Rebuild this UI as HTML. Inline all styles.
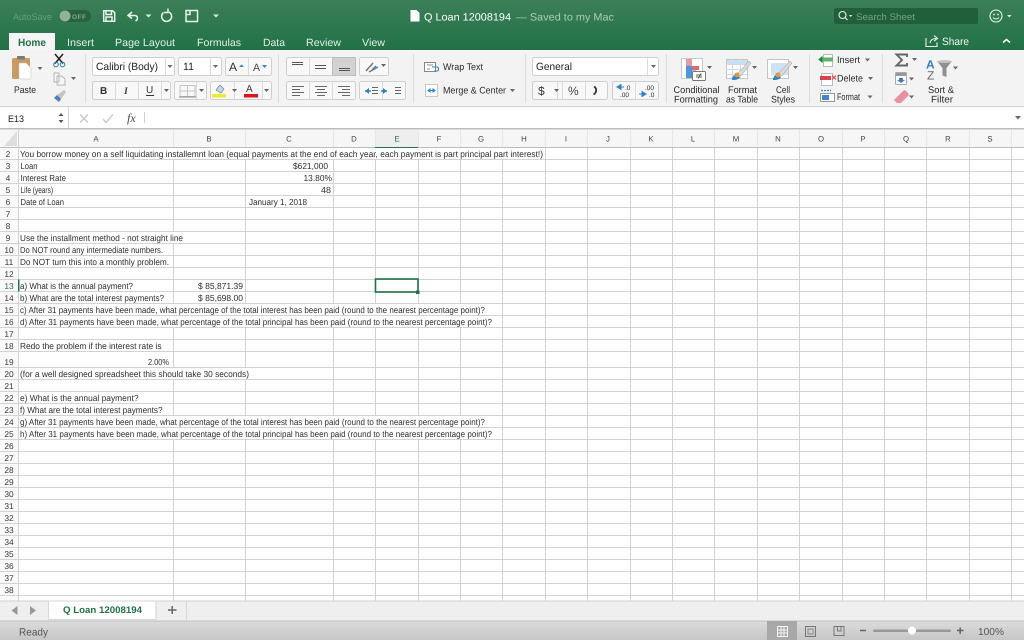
<!DOCTYPE html>
<html><head><meta charset="utf-8"><title>Q Loan 12008194</title>
<style>
html,body{margin:0;padding:0;background:#fff;width:1024px;height:640px;overflow:hidden}
svg{display:block;filter:blur(.38px);font-family:"Liberation Sans",sans-serif;text-rendering:geometricPrecision}
.c text{font-size:8.8px;fill:#2e2e2e}
.r text{font-size:8.4px;fill:#3a3a3a;text-anchor:middle}
.h text{font-size:7.8px;fill:#444;text-anchor:middle}
.t{font-size:10.5px;fill:#e4efe8}
.l{font-size:9.6px;fill:#2a2a2a}
</style></head><body>
<svg width="1024" height="640" viewBox="0 0 1024 640" xmlns="http://www.w3.org/2000/svg">
<defs>
<linearGradient id="g" x1="0" y1="0" x2="0" y2="1"><stop offset="0" stop-color="#3c7f58"/><stop offset="1" stop-color="#217147"/></linearGradient>
<linearGradient id="s" x1="0" y1="0" x2="0" y2="1"><stop offset="0" stop-color="#dcdcdc"/><stop offset="1" stop-color="#c6c6c6"/></linearGradient>
<path id="k" d="M0 0h5l-2.500 3z" fill="#666"/>
<path id="w" d="M0 0h6l-3 3z" fill="#dcebe2"/>
</defs>

<!-- title bar -->
<rect width="1024" height="50" fill="url(#g)"/>
<text x="13" y="20" font-size="9.500" fill="#659f7d" textLength="39" lengthAdjust="spacingAndGlyphs">AutoSave</text>
<rect x="59" y="10" width="32" height="12" rx="6" fill="#2a6240"/>
<circle cx="65" cy="16" r="5.500" fill="#8fb29d"/>
<text x="72" y="19" font-size="6.500" font-weight="bold" fill="#7ea88f" textLength="14">OFF</text>
<g fill="none" stroke="#e9f2ec" stroke-width="1.500">
<path d="M103.700 10.700h9l2 2v8.600h-11z"/><path d="M106 11v3.500h5.500V11M106 21v-4h6v4"/>
<path d="M132 12l-4 3.500 4 3M128.500 15.500h6c3.500 0 4 4 1 5.500"/>
<path d="M163.500 12.500a5 5 0 1 0 5.500-.5M168 8.500v4h-4"/>
<rect x="186" y="10.500" width="11.500" height="11"/><path d="M190 10.500v4h-3.500"/>
</g>
<use href="#w" x="145.500" y="14.500"/><use href="#w" x="213" y="14.500"/>
<path d="M410.500 10h6l3 3v8.500h-9z" fill="#fff"/>
<text x="424" y="20.500" font-size="10.500" fill="#fff" textLength="87" lengthAdjust="spacingAndGlyphs">Q Loan 12008194</text>
<text x="516" y="20.500" font-size="10.500" fill="#a6cfb6" textLength="98" lengthAdjust="spacingAndGlyphs">— Saved to my Mac</text>
<rect x="834" y="8" width="144" height="16" rx="2" fill="#205f3a"/>
<circle cx="842.500" cy="15" r="3.500" fill="none" stroke="#e2eee7" stroke-width="1.100"/><path d="M845 17.500l2.500 2.500" stroke="#e2eee7" stroke-width="1.200"/>
<path d="M849 15h3.500l-1.750 2z" fill="#dcebe2"/>
<text x="856" y="20" font-size="9.500" fill="#73a388" textLength="59" lengthAdjust="spacingAndGlyphs">Search Sheet</text>
<circle cx="996" cy="16" r="6" fill="none" stroke="#e8f1eb" stroke-width="1.100"/>
<circle cx="994" cy="14.500" r=".9" fill="#e8f1eb"/><circle cx="998" cy="14.500" r=".9" fill="#e8f1eb"/>
<path d="M993 17.500c1.500 2 4.500 2 6 0" fill="none" stroke="#e8f1eb"/>
<path d="M1007 15h4.500l-2.250 2.500z" fill="#dcebe2"/>

<!-- tabs -->
<path d="M9 50V33h46v17z" fill="#f5f5f5"/>
<text x="18" y="46" font-size="10.500" font-weight="bold" fill="#217346" textLength="28" lengthAdjust="spacingAndGlyphs">Home</text>
<text class="t" x="67" y="46" textLength="27" lengthAdjust="spacingAndGlyphs">Insert</text>
<text class="t" x="115" y="46" textLength="60" lengthAdjust="spacingAndGlyphs">Page Layout</text>
<text class="t" x="197" y="46" textLength="44" lengthAdjust="spacingAndGlyphs">Formulas</text>
<text class="t" x="263" y="46" textLength="22" lengthAdjust="spacingAndGlyphs">Data</text>
<text class="t" x="306" y="46" textLength="35" lengthAdjust="spacingAndGlyphs">Review</text>
<text class="t" x="362" y="46" textLength="23" lengthAdjust="spacingAndGlyphs">View</text>
<path d="M926 38v8.500h11v-4M930 43c.5-3 3-4.500 6-4.500M934 35.500l3.500 3-3.500 2.500" fill="none" stroke="#e8f1eb" stroke-width="1.100"/>
<text x="942" y="45" font-size="10.500" fill="#f2f7f4" textLength="27" lengthAdjust="spacingAndGlyphs">Share</text>
<path d="M1003 42.500l3.500-3 3.500 3" fill="none" stroke="#fff" stroke-width="1.500"/>

<!-- ribbon -->
<rect y="50" width="1024" height="56" fill="#f3f3f3"/>
<rect y="106" width="1024" height="1" fill="#cfcfcf"/>
<g fill="#dcdcdc"><rect x="85" y="54" width="1" height="49"/><rect x="278" y="54" width="1" height="49"/><rect x="413" y="54" width="1" height="49"/><rect x="525" y="54" width="1" height="49"/><rect x="666" y="54" width="1" height="49"/><rect x="809" y="54" width="1" height="49"/><rect x="882" y="54" width="1" height="49"/></g>

<!-- clipboard -->
<rect x="12" y="58" width="18" height="21" rx="1.500" fill="#c99a64"/>
<rect x="17" y="56" width="8" height="3.500" rx="1" fill="#7a7a7a"/>
<path d="M19 63h7l5 5v11H19z" fill="#fff" stroke="#c4c4c4" stroke-width=".5"/>
<use href="#k" x="37.500" y="67"/>
<text class="l" x="14" y="93" textLength="22" lengthAdjust="spacingAndGlyphs">Paste</text>
<path d="M55 54l8 9.500M63 54l-8 9.500" stroke="#222" stroke-width="1.500"/>
<circle cx="56" cy="64.500" r="2.300" fill="none" stroke="#3d7fc4" stroke-width="1.100"/><circle cx="62.500" cy="64.500" r="2.300" fill="none" stroke="#3d7fc4" stroke-width="1.100"/>
<path d="M57 76h5l3 3v6h-8zM54 73h5v9h-5z" fill="#f6f6f6" stroke="#b4b4b4"/>
<use href="#k" x="71" y="77"/>
<path d="M57 95l7-5 2 2-5 7z" fill="#c9c4ba"/><path d="M54 98l3-3 4 4-2 3z" fill="#4a7fb8"/>

<!-- font controls -->
<g fill="#fff" stroke="#cfcfcf"><rect x="92.500" y="57.500" width="82" height="18" rx="2"/><rect x="178.500" y="57.500" width="43" height="18" rx="2"/></g>
<g fill="#f8f8f8" stroke="#cfcfcf">
<rect x="225.500" y="57.500" width="46" height="18" rx="2"/>
<rect x="92.500" y="81.500" width="78" height="18" rx="2"/>
<rect x="174.500" y="81.500" width="32" height="18" rx="2"/>
<rect x="210.500" y="81.500" width="61" height="18" rx="2"/>
<rect x="286.500" y="57.500" width="69" height="18" rx="2"/>
<rect x="359.500" y="57.500" width="29" height="18" rx="2"/>
<rect x="286.500" y="81.500" width="69" height="18" rx="2"/>
<rect x="359.500" y="81.500" width="46" height="18" rx="2"/>
<rect x="532.500" y="81.500" width="75" height="18" rx="2"/>
<rect x="612.500" y="81.500" width="46" height="18" rx="2"/>
</g>
<rect x="332.500" y="57.500" width="23" height="18" fill="#d2d2d2" stroke="#bdbdbd"/>
<g stroke="#dadada"><path d="M165.500 58v17M210.500 58v17M248.500 58v17M115.500 82v17M138.500 82v17M161.500 82v17M196.500 82v17M234.500 82v17M262.500 82v17M309.500 58v17M309.500 82v17M332.500 82v17M382.500 82v17"/></g>
<text x="96" y="70" font-size="10.500" fill="#222" textLength="62" lengthAdjust="spacingAndGlyphs">Calibri (Body)</text>
<use href="#k" x="167.500" y="65"/>
<text x="183" y="70" font-size="10.500" fill="#222" textLength="11">11</text>
<use href="#k" x="213" y="65"/>
<text x="229" y="71" font-size="12" fill="#333">A</text><path d="M239 67l2.500-2.500 2.500 2.500z" fill="#3b82c4"/>
<text x="253" y="71" font-size="10.500" fill="#444">A</text><path d="M262 65h5l-2.500 3z" fill="#3b82c4"/>
<text x="100" y="94" font-size="10" font-weight="bold" fill="#333">B</text>
<text x="124" y="94" font-size="10" font-style="italic" font-family="Liberation Serif" font-weight="bold" fill="#444">I</text>
<text x="146" y="93" font-size="10" fill="#333">U</text><path d="M146 95.500h8" stroke="#333"/>
<use href="#k" x="164" y="89"/>
<path d="M180 85.500h15v11h-15zM187.500 85.500v11M180 91h15" fill="none" stroke="#c4c4c4"/><path d="M179 97h17" stroke="#888"/>
<use href="#k" x="199" y="89"/>
<path d="M216 90l4-5 4 4-3 4z" fill="#cfd4da" stroke="#5b87b5" stroke-width=".7"/><rect x="212" y="94" width="14" height="3.500" fill="#f2e830"/>
<use href="#k" x="232" y="89"/>
<text x="246" y="92" font-size="10" fill="#333">A</text><rect x="244" y="94" width="14" height="3.500" fill="#e0121c"/>
<use href="#k" x="264" y="89"/>

<!-- alignment -->
<g stroke="#555" stroke-width="1.100"><path d="M292 62.500h11M292 64.500h11M315 65.500h11M315 68.500h11M339 68.500h11M339 70.500h11"/></g>
<g stroke="#666" stroke-width="1"><path d="M292 86.500h12M292 89.500h8M292 92.500h12M292 95.500h8M315 86.500h12M317 89.500h8M315 92.500h12M317 95.500h8M338 86.500h12M342 89.500h8M338 92.500h12M342 95.500h8"/></g>
<path d="M366 71l7-8M369 72l9-5" stroke="#777" stroke-width="1.500"/><path d="M372 70l4-4" stroke="#3b82c4" stroke-width="1.500"/>
<use href="#k" x="381" y="64"/>
<path d="M365 91l4-3v6z M387 91l-4-3v6z" fill="#2f7fcb"/><path d="M365 91h6M387 91h-6" stroke="#2f7fcb" stroke-width="1.500"/>
<g stroke="#666"><path d="M372 87.500h6M372 90.500h6M372 93.500h6M395 87.500h6M395 90.500h6M395 93.500h6"/></g>

<!-- wrap / merge -->
<rect x="424.500" y="62.500" width="11" height="9" fill="#fff" stroke="#888"/><path d="M427 65h6M427 69h3" stroke="#888"/>
<path d="M432 67h5c2 0 2 4 0 4h-3" fill="none" stroke="#2f7fcb" stroke-width="1.100"/>
<text class="l" x="443" y="70" textLength="40" lengthAdjust="spacingAndGlyphs">Wrap Text</text>
<rect x="425.500" y="84.500" width="12" height="12" fill="#fff" stroke="#c8c8c8"/><path d="M428 90.500h7M428 90.500l2-1.500v3zM435 90.500l-2-1.500v3z" fill="#2f7fcb" stroke="#2f7fcb"/>
<text class="l" x="443" y="93.500" textLength="63" lengthAdjust="spacingAndGlyphs">Merge &amp; Center</text>
<use href="#k" x="510" y="89"/>

<!-- number -->
<rect x="532.500" y="57.500" width="126" height="18" rx="2" fill="#fff" stroke="#cfcfcf"/>
<path d="M647.500 58v17M557.500 82v17M562.500 82v17M585.500 82v17M635.500 82v17" stroke="#dadada"/>
<text x="536" y="70" font-size="10.500" fill="#222" textLength="36" lengthAdjust="spacingAndGlyphs">General</text>
<use href="#k" x="651" y="65"/>
<text x="538" y="95" font-size="12" fill="#333">$</text><use href="#k" x="554" y="89"/>
<text x="568" y="95" font-size="12" fill="#444">%</text>
<path d="M594 86.500c3 2 3 6-.5 8" fill="none" stroke="#333" stroke-width="1.800"/>
<path d="M617 87l4-2.500v5zM621 87h3" fill="#2f7fcb" stroke="#2f7fcb"/><text x="625" y="90" font-size="6.500" fill="#333">.0</text><text x="620" y="97" font-size="6.500" fill="#333">.00</text>
<text x="645" y="90" font-size="6.500" fill="#333">.00</text><path d="M646 94l-4-2.500v5zM642 94h-3" fill="#2f7fcb" stroke="#2f7fcb"/><text x="649" y="97" font-size="6.500" fill="#333">.0</text>

<!-- conditional -->
<rect x="681.500" y="58.500" width="21" height="20" fill="#fff" stroke="#c8c8c8"/>
<rect x="686" y="59" width="6" height="7" fill="#e69a9e"/><rect x="686" y="66" width="6" height="7" fill="#4f94d6"/><rect x="692" y="66" width="7" height="4" fill="#e06a70"/><rect x="692" y="70" width="4" height="8" fill="#9cc4e8"/><rect x="686" y="73" width="6" height="5" fill="#4f94d6"/>
<rect x="692.500" y="71.500" width="13" height="9" rx="1" fill="#fff" stroke="#777"/><path d="M696 75h6M696 77h6M701 73.500l-3 5" stroke="#333" stroke-width=".7"/>
<use href="#k" x="707" y="66"/>
<text class="l" x="673.500" y="93" textLength="46" lengthAdjust="spacingAndGlyphs">Conditional</text>
<text class="l" x="674" y="102.500" textLength="44" lengthAdjust="spacingAndGlyphs">Formatting</text>
<rect x="726.500" y="59.500" width="21" height="19" fill="#fff" stroke="#c4c4c4"/><path d="M726 64.500h21M726 69.500h21M726 74.500h21M732.500 59v19M740.500 59v19" stroke="#cfd9e4"/><rect x="727" y="60" width="20" height="4" fill="#c9dff2"/>
<path d="M737 74l12-13 2 2-10 13z" fill="#d9d9d9" stroke="#999" stroke-width=".5"/><path d="M732 80c0-3 2-5 4-6l4 3c-1 2-3 3-8 3z" fill="#2f7fcb"/><circle cx="737" cy="75" r="2.500" fill="#e09a3a"/>
<use href="#k" x="752" y="66"/>
<text class="l" x="728" y="93" textLength="29" lengthAdjust="spacingAndGlyphs">Format</text>
<text class="l" x="726" y="102.500" textLength="32" lengthAdjust="spacingAndGlyphs">as Table</text>
<rect x="767.500" y="59.500" width="21" height="19" fill="#fff" stroke="#c4c4c4"/><rect x="771" y="63" width="17" height="12" fill="#cfe2f5"/>
<path d="M778 74l12-13 2 2-10 13z" fill="#d9d9d9" stroke="#999" stroke-width=".5"/><path d="M773 80c0-3 2-5 4-6l4 3c-1 2-3 3-8 3z" fill="#2f7fcb"/><circle cx="778" cy="75" r="2.500" fill="#e09a3a"/>
<use href="#k" x="793" y="66"/>
<text class="l" x="776" y="93" textLength="14" lengthAdjust="spacingAndGlyphs">Cell</text>
<text class="l" x="771" y="102.500" textLength="24" lengthAdjust="spacingAndGlyphs">Styles</text>

<!-- cells -->
<rect x="823.500" y="54.500" width="9" height="12" fill="#fff" stroke="#bbb"/><rect x="821" y="57.500" width="12" height="4" fill="#5fb36a"/><path d="M821 59.500h-2M819 59.500l3-2.500v5z" fill="#218a3c" stroke="#218a3c"/>
<text class="l" x="837" y="63" textLength="23" lengthAdjust="spacingAndGlyphs">Insert</text><use href="#k" x="865" y="58.500"/>
<rect x="821.500" y="73.500" width="11" height="12" fill="#fff" stroke="#bbb"/><rect x="820" y="76" width="11" height="4" fill="#d8424a"/><path d="M832 75.500l4 4M836 75.500l-4 4" stroke="#d8424a" stroke-width="1.100"/>
<text class="l" x="837" y="81.500" textLength="26" lengthAdjust="spacingAndGlyphs">Delete</text><use href="#k" x="868" y="77"/>
<rect x="820.500" y="93.500" width="14" height="8" fill="#fff" stroke="#999"/><rect x="822" y="95" width="7" height="5" fill="#3f86cc"/><path d="M821 90.500h10" stroke="#3f86cc" stroke-width="1.200" stroke-dasharray="2 1"/>
<text class="l" x="837" y="100" textLength="23" lengthAdjust="spacingAndGlyphs">Format</text><use href="#k" x="867.500" y="95.500"/>

<!-- editing -->
<path d="M907 57v-2.500h-10.500l5.500 5.500-5.500 5.500h10.500V63" fill="none" stroke="#666" stroke-width="1.900"/><use href="#k" x="912" y="58"/>
<rect x="895.500" y="72.500" width="11" height="12" rx="1" fill="#fff" stroke="#aaa"/><rect x="896" y="73" width="10" height="3" fill="#999"/><path d="M899 78h4v2h2l-4 3-4-3h2z" fill="#2f7fcb"/><use href="#k" x="909" y="77.500"/>
<path d="M894 100l9-9c1-1 2-1 3 0l2 2c1 1 1 2 0 3l-7 7h-4z" fill="#e8909e"/><use href="#k" x="909" y="95.500"/>
<text x="926" y="68.500" font-size="12" font-weight="bold" fill="#2f7fcb">A</text><text x="927" y="79.500" font-size="12" fill="#666">Z</text>
<path d="M937 61h15l-5.500 7v9l-4-1.500V68z" fill="#8f8f8f"/><ellipse cx="944.500" cy="61.500" rx="7.500" ry="1.500" fill="#c4c4c4"/><use href="#k" x="953" y="66.500"/>
<text class="l" x="928" y="93" textLength="26" lengthAdjust="spacingAndGlyphs">Sort &amp;</text>
<text class="l" x="931" y="102.500" textLength="22" lengthAdjust="spacingAndGlyphs">Filter</text>

<!-- formula bar -->
<rect y="107" width="1024" height="21" fill="#fff"/>
<rect y="128" width="1024" height="1.500" fill="#b9b9b9"/>
<rect x="68" y="107" width="1" height="21" fill="#d4d4d4"/>
<text x="8" y="122" font-size="9.500" fill="#222" textLength="16" lengthAdjust="spacingAndGlyphs">E13</text>
<path d="M58.500 116l2.500-3 2.500 3zM58.500 120l2.500 3 2.500-3z" fill="#555"/>
<path d="M80 114.500l8 8M88 114.500l-8 8" stroke="#c8c8c8" stroke-width="1.400"/>
<path d="M103 119l3 3.500 7-8" stroke="#c8c8c8" stroke-width="1.400" fill="none"/>
<text x="127" y="122" font-size="12" font-style="italic" font-family="Liberation Serif" fill="#444">fx</text>
<rect x="144" y="112" width="1" height="11" fill="#d0d0d0"/>
<path d="M1015 116h6l-3 3.500z" fill="#666"/>

<!-- headers -->
<rect y="130" width="1024" height="17" fill="#f6f6f6"/>
<rect y="147" width="18" height="454" fill="#fafafa"/>
<path d="M17 131v15H4z" fill="#dedede"/>
<rect x="375" y="130" width="43" height="17" fill="#eeeeee"/>

<!-- grid -->
<g stroke="#d2d2d2" stroke-width="1">
<path d="M18.500 130v471M173.500 147v454M245.500 147v454M333.500 147v454M375.500 147v454M418.500 147v454M460.500 147v454M502.500 147v454M545.500 147v454M587.500 147v454M630.500 147v454M672.500 147v454M714.500 147v454M757.500 147v454M799.500 147v454M842.500 147v454M884.500 147v454M926.500 147v454M969.500 147v454M1011.500 147v454"/>
<path d="M0 159.500h1024M0 171.500h1024M0 183.500h1024M0 195.500h1024M0 207.500h1024M0 219.500h1024M0 231.500h1024M0 243.500h1024M0 255.500h1024M0 267.500h1024M0 279.500h1024M0 291.500h1024M0 303.500h1024M0 315.500h1024M0 327.500h1024M0 339.500h1024M0 351.500h1024M0 367.500h1024M0 379.500h1024M0 391.500h1024M0 403.500h1024M0 415.500h1024M0 427.500h1024M0 439.500h1024M0 451.500h1024M0 463.500h1024M0 475.500h1024M0 487.500h1024M0 499.500h1024M0 511.500h1024M0 523.500h1024M0 535.500h1024M0 547.500h1024M0 559.500h1024M0 571.500h1024M0 583.500h1024M0 595.500h1024"/>
</g>
<g stroke="#e6e6e6"><path d="M173.500 130v17M245.500 130v17M333.500 130v17M375.500 130v17M418.500 130v17M460.500 130v17M502.500 130v17M545.500 130v17M587.500 130v17M630.500 130v17M672.500 130v17M714.500 130v17M757.500 130v17M799.500 130v17M842.500 130v17M884.500 130v17M926.500 130v17M969.500 130v17M1011.500 130v17"/></g>
<rect y="147" width="1024" height="1" fill="#bdbdbd"/>
<rect x="375" y="147" width="43" height="1.500" fill="#217346"/>
<rect x="18" y="279.500" width="1.500" height="12" fill="#217346"/>

<!-- overflow masks -->
<g fill="#fff">
<rect x="19" y="148" width="526" height="11"/>
<rect x="19" y="232" width="226" height="11"/>
<rect x="19" y="304" width="483" height="11"/>
<rect x="19" y="316" width="483" height="11"/>
<rect x="19" y="368" width="314" height="11"/>
<rect x="19" y="416" width="483" height="11"/>
<rect x="19" y="428" width="483" height="11"/>
</g>

<g class="h">
<text x="96" y="141.500">A</text><text x="209" y="141.500">B</text><text x="289" y="141.500">C</text><text x="354" y="141.500">D</text><text x="397" y="141.500" style="fill:#217346">E</text><text x="439" y="141.500">F</text><text x="481" y="141.500">G</text><text x="524" y="141.500">H</text><text x="566" y="141.500">I</text><text x="608" y="141.500">J</text><text x="651" y="141.500">K</text><text x="693" y="141.500">L</text><text x="736" y="141.500">M</text><text x="778" y="141.500">N</text><text x="821" y="141.500">O</text><text x="863" y="141.500">P</text><text x="906" y="141.500">Q</text><text x="948" y="141.500">R</text><text x="990" y="141.500">S</text>
</g>
<g class="r">
<text x="8" y="157">2</text><text x="8" y="169">3</text><text x="8" y="181">4</text><text x="8" y="193">5</text><text x="8" y="205">6</text><text x="8" y="217">7</text><text x="8" y="229">8</text><text x="8" y="241">9</text><text x="9" y="253">10</text><text x="9" y="265">11</text><text x="9" y="277">12</text><text x="9" y="289" style="fill:#217346">13</text><text x="9" y="301">14</text><text x="9" y="313">15</text><text x="9" y="325">16</text><text x="9" y="337">17</text><text x="9" y="349">18</text><text x="9" y="365">19</text><text x="9" y="377">20</text><text x="9" y="389">21</text><text x="9" y="401">22</text><text x="9" y="413">23</text><text x="9" y="425">24</text><text x="9" y="437">25</text><text x="9" y="449">26</text><text x="9" y="461">27</text><text x="9" y="473">28</text><text x="9" y="485">29</text><text x="9" y="497">30</text><text x="9" y="509">31</text><text x="9" y="521">32</text><text x="9" y="533">33</text><text x="9" y="545">34</text><text x="9" y="557">35</text><text x="9" y="569">36</text><text x="9" y="581">37</text><text x="9" y="593">38</text>
</g>

<g class="c">
<text x="20" y="157" textLength="523" lengthAdjust="spacingAndGlyphs">You borrow money on a self liquidating installemnt loan (equal payments at the end of each year, each payment is part principal part interest!)</text>
<text x="20.500" y="169" textLength="17" lengthAdjust="spacingAndGlyphs">Loan</text>
<text x="293" y="169" textLength="35" lengthAdjust="spacingAndGlyphs">$621,000</text>
<text x="20.500" y="181" textLength="45.500" lengthAdjust="spacingAndGlyphs">Interest Rate</text>
<text x="303.500" y="181" textLength="28.500" lengthAdjust="spacingAndGlyphs">13.80%</text>
<text x="20.500" y="193" textLength="32.500" lengthAdjust="spacingAndGlyphs">Life (years)</text>
<text x="321" y="193" textLength="10" lengthAdjust="spacingAndGlyphs">48</text>
<text x="20.500" y="205" textLength="43.500" lengthAdjust="spacingAndGlyphs">Date of Loan</text>
<text x="249" y="205" textLength="58" lengthAdjust="spacingAndGlyphs">January 1, 2018</text>
<text x="20" y="241" textLength="163" lengthAdjust="spacingAndGlyphs">Use the installment method - not straight line</text>
<text x="20" y="253" textLength="143" lengthAdjust="spacingAndGlyphs">Do NOT round any intermediate numbers.</text>
<text x="20" y="265" textLength="149" lengthAdjust="spacingAndGlyphs">Do NOT turn this into a monthly problem.</text>
<text x="20" y="289" textLength="113" lengthAdjust="spacingAndGlyphs">a) What is the annual payment?</text>
<text x="198" y="289" textLength="45" lengthAdjust="spacingAndGlyphs">$ 85,871.39</text>
<text x="20" y="301" textLength="144" lengthAdjust="spacingAndGlyphs">b) What are the total interest payments?</text>
<text x="198" y="301" textLength="45" lengthAdjust="spacingAndGlyphs">$ 85,698.00</text>
<text x="20" y="313" textLength="465" lengthAdjust="spacingAndGlyphs">c) After 31 payments have been made, what percentage of the total interest has been paid (round to the nearest percentage point)?</text>
<text x="20" y="325" textLength="472" lengthAdjust="spacingAndGlyphs">d) After 31 payments have been made, what percentage of the total principal has been paid (round to the nearest percentage point)?</text>
<text x="20" y="349" textLength="141.500" lengthAdjust="spacingAndGlyphs">Redo the problem if the interest rate is</text>
<text x="148" y="365" textLength="21" lengthAdjust="spacingAndGlyphs">2.00%</text>
<text x="20" y="377" textLength="229" lengthAdjust="spacingAndGlyphs">(for a well designed spreadsheet this should take 30 seconds)</text>
<text x="20" y="401" textLength="118.500" lengthAdjust="spacingAndGlyphs">e) What is the annual payment?</text>
<text x="20" y="413" textLength="142.500" lengthAdjust="spacingAndGlyphs">f) What are the total interest payments?</text>
<text x="20" y="425" textLength="465" lengthAdjust="spacingAndGlyphs">g) After 31 payments have been made, what percentage of the total interest has been paid (round to the nearest percentage point)?</text>
<text x="20" y="437" textLength="472" lengthAdjust="spacingAndGlyphs">h) After 31 payments have been made, what percentage of the total principal has been paid (round to the nearest percentage point)?</text>
</g>

<!-- selection -->
<rect x="375.500" y="279" width="42.500" height="13" fill="none" stroke="#217346" stroke-width="1.600"/>
<rect x="416" y="290.500" width="3.500" height="3.500" fill="#217346"/>

<!-- sheet tabs -->
<rect y="601" width="1024" height="20" fill="#efefef"/>
<rect y="600.500" width="1024" height="1" fill="#d0d0d0"/>
<rect x="48.500" y="601" width="107.500" height="18.500" fill="#fff" stroke="#d6d6d6"/>
<path d="M11.500 610.500l6-4.500v9z" fill="#999"/><path d="M36 610.500l-6-4.500v9z" fill="#999"/>
<text x="63" y="613" font-size="9.500" font-weight="bold" fill="#217346" textLength="79" lengthAdjust="spacingAndGlyphs">Q Loan 12008194</text>
<path d="M168 610h8.500M172.200 606v8" stroke="#666" stroke-width="1.500"/>
<rect x="186" y="601" width="1" height="19" fill="#d8d8d8"/>

<!-- status -->
<rect y="621" width="1024" height="19" fill="url(#s)"/>
<rect y="620.500" width="1024" height="1" fill="#bfbfbf"/>
<text x="19" y="635.500" font-size="10.500" fill="#555" textLength="29" lengthAdjust="spacingAndGlyphs">Ready</text>
<rect x="767" y="621" width="30" height="19" fill="#a8a8a8"/>
<path d="M777.500 626.500h10v10h-10zM777.500 630h10M777.500 633h10M781 626.500v10M784 626.500v10" fill="none" stroke="#f4f4f4"/>
<rect x="805.500" y="626.500" width="10" height="10" fill="none" stroke="#777"/><rect x="808" y="629" width="5" height="5" fill="none" stroke="#888"/>
<path d="M834 626.500h10v9h-10zM837.500 626.500v4.500h3.500v-4.500" fill="none" stroke="#777"/>
<path d="M860 630.500h6" stroke="#666" stroke-width="1.500"/>
<rect x="873" y="629.500" width="78" height="2.500" rx="1" fill="#999"/>
<circle cx="912" cy="630.500" r="4" fill="#fff"/>
<path d="M957 630.500h6.500M960.200 627.500v6.500" stroke="#666" stroke-width="1.500"/>
<text x="978" y="635" font-size="10" fill="#555" textLength="26" lengthAdjust="spacingAndGlyphs">100%</text>
</svg>
</body></html>
